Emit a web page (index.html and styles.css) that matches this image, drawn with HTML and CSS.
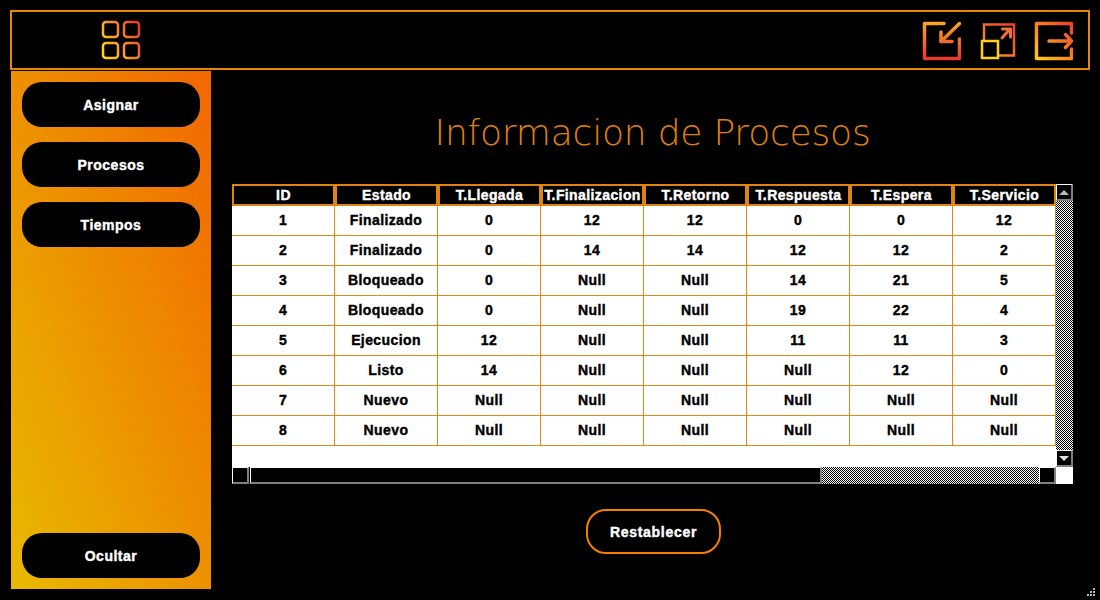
FILE: index.html
```html
<!DOCTYPE html>
<html lang="es">

<head>
    <meta charset="UTF-8" />
    <title>Informacion de Procesos</title>
    <link rel="stylesheet" href="styles.css">
</head>

<body>
    <header class="topbar">
        <svg class="menu-icon" width="40" height="40" viewBox="0 0 40 40" fill="none" stroke="url(#gradMenu)" stroke-width="2.500">
            <defs>
                <linearGradient id="gradMenu" gradientUnits="userSpaceOnUse" x1="1" y1="30" x2="39" y2="10">
                    <stop offset="0" stop-color="#ffd60a" />
                    <stop offset="0.45" stop-color="#f99a20" />
                    <stop offset="1" stop-color="#e83c30" />
                </linearGradient>
            </defs>
            <rect x="2" y="2" width="15" height="15" rx="3" />
            <rect x="23" y="2" width="15" height="15" rx="3" />
            <rect x="2" y="23" width="15" height="15" rx="3" />
            <rect x="23" y="23" width="15" height="15" rx="3" />
        </svg>
        <div class="window-icons">
            <svg width="40" height="40" viewBox="0 0 40 40" fill="none" stroke="url(#gradMin)" stroke-width="3.500" stroke-linecap="round" stroke-linejoin="round">
                <defs>
                    <linearGradient id="gradMin" gradientUnits="userSpaceOnUse" x1="20" y1="1" x2="20" y2="39">
                        <stop offset="0" stop-color="#f9a826" />
                        <stop offset="1" stop-color="#e8352f" />
                    </linearGradient>
                </defs>
                <path d="M23 2.500H3.500V37.500H38.500V18" />
                <path d="M38.500 2.500L20 20.500" />
                <path d="M20 11V20.500H31" />
            </svg>
            <svg width="40" height="40" viewBox="0 0 40 40" fill="none" stroke-width="2.500">
                <defs>
                    <linearGradient id="gradMax" gradientUnits="userSpaceOnUse" x1="5" y1="36" x2="37" y2="3">
                        <stop offset="0" stop-color="#f9a826" />
                        <stop offset="1" stop-color="#e8402f" />
                    </linearGradient>
                </defs>
                <path d="M7 20V3.500H37V34.500H20" stroke="url(#gradMax)" />
                <path d="M25 17L33 8M25.500 8H33.500V16" stroke="#f0703a" stroke-width="3" stroke-linecap="round" stroke-linejoin="round" />
                <rect x="5" y="20" width="16" height="17" stroke="#fdd20f" />
            </svg>
            <svg width="40" height="40" viewBox="0 0 40 40" fill="none" stroke="url(#gradExit)" stroke-width="3.500" stroke-linecap="round" stroke-linejoin="round">
                <defs>
                    <linearGradient id="gradExit" gradientUnits="userSpaceOnUse" x1="1" y1="39" x2="39" y2="1">
                        <stop offset="0" stop-color="#ffd20f" />
                        <stop offset="1" stop-color="#ee3b2f" />
                    </linearGradient>
                </defs>
                <path d="M38.500 12V2.500H3.500V37.500H38.500V28" />
                <path d="M16 20H38" />
                <path d="M32.500 13.500L38.500 20L32.500 26.500" />
            </svg>
        </div>
    </header>

    <div class="main">
        <aside class="sidebar">
            <button class="side-btn">Asignar</button>
            <button class="side-btn">Procesos</button>
            <button class="side-btn">Tiempos</button>
            <button class="side-btn side-btn-bottom">Ocultar</button>
        </aside>

        <section class="content">
            <h1 class="title">Informacion de Procesos</h1>

            <div class="table-box">
                <div class="table-view">
                    <table class="process-table">
                        <thead>
                            <tr>
                                <th>ID</th>
                                <th>Estado</th>
                                <th>T.Llegada</th>
                                <th>T.Finalizacion</th>
                                <th>T.Retorno</th>
                                <th>T.Respuesta</th>
                                <th>T.Espera</th>
                                <th>T.Servicio</th>
                            </tr>
                        </thead>
                        <tbody>
                            <tr><td>1</td><td>Finalizado</td><td>0</td><td>12</td><td>12</td><td>0</td><td>0</td><td>12</td></tr>
                            <tr><td>2</td><td>Finalizado</td><td>0</td><td>14</td><td>14</td><td>12</td><td>12</td><td>2</td></tr>
                            <tr><td>3</td><td>Bloqueado</td><td>0</td><td>Null</td><td>Null</td><td>14</td><td>21</td><td>5</td></tr>
                            <tr><td>4</td><td>Bloqueado</td><td>0</td><td>Null</td><td>Null</td><td>19</td><td>22</td><td>4</td></tr>
                            <tr><td>5</td><td>Ejecucion</td><td>12</td><td>Null</td><td>Null</td><td>11</td><td>11</td><td>3</td></tr>
                            <tr><td>6</td><td>Listo</td><td>14</td><td>Null</td><td>Null</td><td>Null</td><td>12</td><td>0</td></tr>
                            <tr><td>7</td><td>Nuevo</td><td>Null</td><td>Null</td><td>Null</td><td>Null</td><td>Null</td><td>Null</td></tr>
                            <tr><td>8</td><td>Nuevo</td><td>Null</td><td>Null</td><td>Null</td><td>Null</td><td>Null</td><td>Null</td></tr>
                        </tbody>
                    </table>
                </div>
                <div class="vscroll">
                    <div class="sb-btn"><span class="arrow-up"></span></div>
                    <div class="sb-track"></div>
                    <div class="sb-btn"><span class="arrow-down"></span></div>
                </div>
                <div class="hscroll">
                    <div class="sb-btn"></div>
                    <div class="sb-thumb"></div>
                    <div class="sb-track"></div>
                    <div class="sb-btn"></div>
                </div>
                <div class="sb-corner"></div>
            </div>

            <div class="actions">
                <button class="reset-btn">Restablecer</button>
            </div>
        </section>
    </div>

    <svg class="grip" width="10" height="10" viewBox="0 0 10 10" fill="#b4b4b4">
        <rect x="6" y="0" width="2" height="2" />
        <rect x="3" y="3" width="2" height="2" />
        <rect x="6" y="3" width="2" height="2" />
        <rect x="0" y="6" width="2" height="2" />
        <rect x="3" y="6" width="2" height="2" />
        <rect x="6" y="6" width="2" height="2" />
    </svg>
</body>

</html>
```

FILE: styles.css
```css
* {
    box-sizing: border-box;
}

html,
body {
    height: 100%;
    overflow: hidden;
}

body {
    margin: 0;
    padding: 10px 10px 0 10px;
    background-color: #000;
    font-family: "Liberation Sans", Arial, sans-serif;
    font-weight: bold;
    font-size: 14px;
    color: #fff;
}

.topbar {
    display: flex;
    align-items: center;
    justify-content: space-between;
    height: 60px;
    border: 2px solid #e8860c;
    padding: 0 15px 0 89px;
}

.window-icons {
    display: flex;
    gap: 16px;
}

.window-icons svg {
    margin-top: 1px;
}

.main {
    display: flex;
    margin: 1px 0 0 1px;
    height: 518px;
}

/* barra lateral */
.sidebar {
    display: flex;
    flex-direction: column;
    gap: 15px;
    width: 200px;
    padding: 11px;
    background: linear-gradient(to top right, #e8ba00, #f26700);
}

.side-btn {
    height: 45px;
    width: 178px;
    background-color: #000;
    color: #fff;
    border: none;
    border-radius: 20px;
    font: inherit;
    letter-spacing: 0.5px;
    -webkit-text-stroke: 0.4px currentColor;
}

.side-btn-bottom {
    margin-top: auto;
}

.content {
    width: 841px;
    margin-left: 21px;
}

.title {
    margin: 0;
    height: 113px;
    padding-top: 32px;
    text-align: center;
    font-family: "DejaVu Sans", sans-serif;
    font-weight: 200;
    font-size: 36px;
    letter-spacing: -0.2px;
    line-height: 60px;
    color: #e08208;
}

/* tabla */
.table-box {
    display: grid;
    grid-template-columns: 824px 17px;
    grid-template-rows: 283px 17px;
}

.table-view {
    background-color: #fff;
    overflow: hidden;
}

.process-table {
    table-layout: fixed;
    width: 824px;
    border-collapse: separate;
    border-spacing: 0;
    letter-spacing: 0.4px;
    -webkit-text-stroke: 0.4px currentColor;
}

.process-table th {
    height: 22px;
    padding: 0;
    background-color: #000;
    border: 2px solid #e08410;
    white-space: nowrap;
    overflow: hidden;
}

.process-table td {
    height: 30px;
    padding: 0 0 2px;
    text-align: center;
    color: #000;
    border-right: 1px solid #e08a1a;
    border-bottom: 1px solid #e08a1a;
}

.vscroll {
    display: flex;
    flex-direction: column;
}

.hscroll {
    display: flex;
}

.sb-btn {
    display: flex;
    align-items: center;
    justify-content: center;
    flex: none;
    width: 17px;
    height: 17px;
    background-color: #000;
    border-style: solid;
    border-width: 1px 2px 2px 1px;
    border-color: #fff #808080 #808080 #fff;
}

.sb-track {
    flex: 1;
    background: repeating-conic-gradient(#000 0 25%, #fff 0 50%) 0 0 / 2px 2px;
}

.sb-thumb {
    width: 572px;
    margin-left: 1px;
    background-color: #000;
    border-style: solid;
    border-width: 1px 2px 2px 1px;
    border-color: #fff #808080 #808080 #fff;
}

.sb-corner {
    background-color: #fff;
}

.arrow-up {
    border: 5px solid transparent;
    border-top: none;
    border-bottom-color: #b8b8b8;
}

.arrow-down {
    border: 5px solid transparent;
    border-bottom: none;
    border-top-color: #e0e0e0;
}

.actions {
    display: flex;
    justify-content: center;
    margin-top: 25px;
    padding-left: 2px;
}

.reset-btn {
    width: 135px;
    height: 45px;
    background-color: #000;
    color: #fff;
    border: 2px solid #f77f00;
    border-radius: 20px;
    font: inherit;
    letter-spacing: 0.7px;
    -webkit-text-stroke: 0.4px currentColor;
}

.grip {
    position: fixed;
    right: 3px;
    bottom: 2px;
}
```
